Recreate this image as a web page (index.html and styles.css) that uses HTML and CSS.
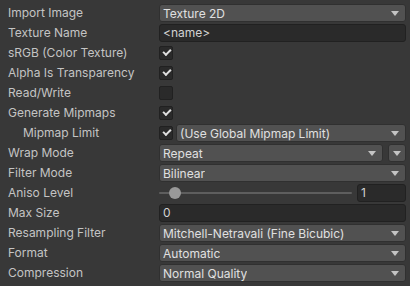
FILE: index.html
```html
<!DOCTYPE html>
<html>
<head>
<meta charset="utf-8">
<link rel="stylesheet" href="styles.css">
</head>
<body>
<div class="inspector">
  <div class="row"><span class="label">Import Image</span><div class="dropdown"><span>Texture 2D</span><i class="arrow"></i></div></div>
  <div class="row"><span class="label">Texture Name</span><div class="field">&lt;name&gt;</div></div>
  <div class="row"><span class="label">sRGB (Color Texture)</span><div class="check on"></div></div>
  <div class="row"><span class="label">Alpha Is Transparency</span><div class="check on"></div></div>
  <div class="row"><span class="label">Read/Write</span><div class="check"></div></div>
  <div class="row"><span class="label">Generate Mipmaps</span><div class="check on"></div></div>
  <div class="row"><span class="label indent">Mipmap Limit</span><div class="combo"><div class="check on"></div><div class="dropdown grow"><span>(Use Global Mipmap Limit)</span><i class="arrow"></i></div></div></div>
  <div class="row"><span class="label">Wrap Mode</span><div class="combo wide"><div class="dropdown grow"><span>Repeat</span><i class="arrow"></i></div><div class="dropdown mini"><i class="arrow"></i></div></div></div>
  <div class="row"><span class="label">Filter Mode</span><div class="dropdown"><span>Bilinear</span><i class="arrow"></i></div></div>
  <div class="row"><span class="label">Aniso Level</span><div class="combo wide"><div class="slider"><div class="track"></div><div class="knob"></div></div><div class="field num">1</div></div></div>
  <div class="row"><span class="label">Max Size</span><div class="field">0</div></div>
  <div class="row"><span class="label">Resampling Filter</span><div class="dropdown"><span>Mitchell-Netravali (Fine Bicubic)</span><i class="arrow"></i></div></div>
  <div class="row"><span class="label">Format</span><div class="dropdown"><span>Automatic</span><i class="arrow"></i></div></div>
  <div class="row"><span class="label">Compression</span><div class="dropdown"><span>Normal Quality</span><i class="arrow"></i></div></div>
</div>
</body>
</html>
```
FILE: styles.css
```css
html, body {
  margin: 0;
  padding: 0;
  background: #383838;
}
body {
  font-family: Inter, "Noto Sans", sans-serif;
  font-size: 12px;
  color: #c4c4c4;
}
.inspector {
  display: flex;
  flex-direction: column;
  gap: 2px;
  padding: 4px 4px 0 8px;
}
.row {
  display: grid;
  grid-template-columns: 151px 1fr;
  height: 18px;
  align-items: center;
}
.label {
  white-space: nowrap;
  line-height: 18px;
}
.label.indent {
  padding-left: 15px;
}
.dropdown {
  box-sizing: border-box;
  height: 18px;
  background: #515151;
  border: 1px solid #303030;
  border-radius: 3px;
  display: flex;
  align-items: center;
  justify-content: space-between;
  padding: 0 6px 0 3px;
  color: #e0e0e0;
  min-width: 0;
}
.dropdown span {
  white-space: nowrap;
  overflow: hidden;
}
.arrow {
  display: block;
  width: 0;
  height: 0;
  border-left: 4px solid transparent;
  border-right: 4px solid transparent;
  border-top: 5px solid #c4c4c4;
  flex: none;
}
.dropdown.grow {
  flex: 1;
}
.dropdown.mini {
  width: 18px;
  padding: 0;
  justify-content: center;
  flex: none;
}
.field {
  box-sizing: border-box;
  height: 18px;
  background: #2a2a2a;
  border: 1px solid #212121;
  border-radius: 3px;
  padding: 0 3px;
  line-height: 16px;
  color: #d2d2d2;
}
.check {
  box-sizing: border-box;
  width: 14px;
  height: 14px;
  background: #2a2a2a;
  border: 1px solid #212121;
  border-radius: 2px;
  position: relative;
  flex: none;
}
.check.on::after {
  content: "";
  position: absolute;
  left: 3px;
  top: 2px;
  width: 6px;
  height: 3px;
  border-left: 2px solid #e0e0e0;
  border-bottom: 2px solid #e0e0e0;
  transform: rotate(-45deg);
}
.combo {
  display: flex;
  align-items: center;
  gap: 3px;
}
.combo.wide {
  gap: 5px;
}
.slider {
  flex: 1;
  height: 18px;
  position: relative;
}
.track {
  position: absolute;
  left: 0;
  right: 0;
  top: 8px;
  height: 2px;
  background: #5e5e5e;
  border-radius: 1px;
}
.knob {
  position: absolute;
  left: 10px;
  top: 3px;
  width: 12px;
  height: 12px;
  border-radius: 50%;
  background: #999999;
}
.field.num {
  width: 49px;
  flex: none;
}
```
